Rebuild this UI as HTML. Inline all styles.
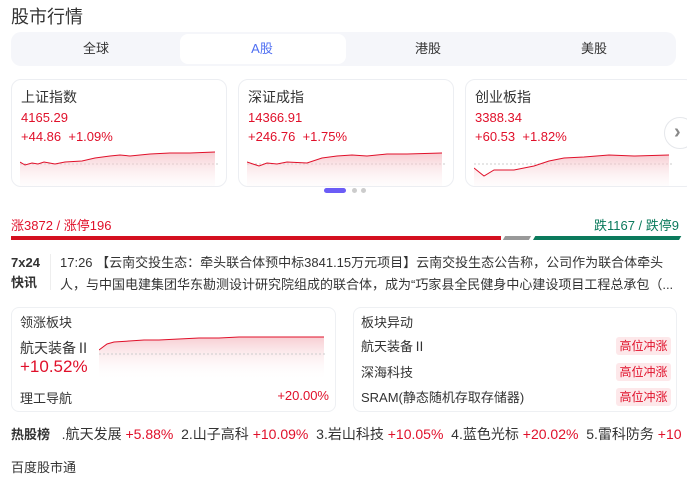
<!DOCTYPE html>
<html><head><meta charset="utf-8"><style>
*{margin:0;padding:0;box-sizing:border-box}
body{width:687px;height:477px;overflow:hidden;background:#fff;font-family:"Liberation Sans","Noto Sans CJK SC",sans-serif;color:#222;position:relative}
.a{position:absolute;white-space:nowrap}
.red{color:#e0102a}.grn{color:#0b7a5c}
.tab{position:absolute;top:0;height:34px;line-height:34px;font-size:13px;color:#333;text-align:center;width:166px}
.card{position:absolute;top:79px;width:216px;height:108px;border:1px solid #eceef2;border-radius:10px;overflow:hidden}
.card .t{position:absolute;left:9px;top:7px;font-size:14px;color:#333}
.card .p{position:absolute;left:9px;top:30px;font-size:13px;color:#e0102a}
.card .c{position:absolute;left:9px;top:49px;font-size:13px;color:#e0102a}
.card svg{position:absolute;left:8px;top:68px}
.box{position:absolute;top:307px;height:105px;border:1px solid #eef0f3;border-radius:8px}
.tag{position:absolute;right:5px;width:55px;height:18px;line-height:18px;text-align:center;font-size:12px;color:#e0102a;background:#fde8ea;border-radius:3px}
</style></head><body>
<div class="a" style="left:11px;top:3px;font-size:18px;color:#333">股市行情</div>
<div class="a" style="left:11px;top:32px;width:665px;height:34px;background:#f5f6fa;border-radius:10px">
<div class="a" style="left:169px;top:2px;width:166px;height:30px;background:#fff;border-radius:8px"></div>
<div class="tab" style="left:2px">全球</div>
<div class="tab" style="left:168px;color:#4e6ef2">A股</div>
<div class="tab" style="left:334px">港股</div>
<div class="tab" style="left:500px">美股</div>
</div>
<svg width="0" height="0" style="position:absolute"><defs><linearGradient id="g" x1="0" y1="0" x2="0" y2="1"><stop offset="0" stop-color="#f4b8bf" stop-opacity=".7"/><stop offset="1" stop-color="#fff" stop-opacity="0"/></linearGradient></defs></svg>
<div class="card" style="left:11px"><div class="t">上证指数</div><div class="p">4165.29</div><div class="c">+44.86&nbsp; +1.09%</div>
<svg width="200" height="40"><line x1="0" y1="16" x2="198" y2="16" stroke="#ccc" stroke-dasharray="2,2"/><path d="M0 6 L5 9 L12 7 L18 8 L24 6 L35 8 L45 6 L62 5 L75 2 L90 0 L100 -1 L110 0 L130 -2 L150 -3 L170 -3 L195 -4 L195 40 L0 40Z" transform="translate(0,8)" fill="url(#g)"/><path d="M0 6 L5 9 L12 7 L18 8 L24 6 L35 8 L45 6 L62 5 L75 2 L90 0 L100 -1 L110 0 L130 -2 L150 -3 L170 -3 L195 -4" transform="translate(0,8)" fill="none" stroke="#e0102a" stroke-width="1"/></svg></div>
<div class="card" style="left:238px"><div class="t">深证成指</div><div class="p">14366.91</div><div class="c">+246.76&nbsp; +1.75%</div>
<svg width="200" height="40"><line x1="0" y1="16" x2="198" y2="16" stroke="#ccc" stroke-dasharray="2,2"/><path d="M0 6 L12 10 L20 7 L30 8 L40 6 L60 7 L75 2 L90 0 L105 -1 L120 0 L140 -2 L160 -2 L195 -3 L195 40 L0 40Z" transform="translate(0,8)" fill="url(#g)"/><path d="M0 6 L12 10 L20 7 L30 8 L40 6 L60 7 L75 2 L90 0 L105 -1 L120 0 L140 -2 L160 -2 L195 -3" transform="translate(0,8)" fill="none" stroke="#e0102a"/></svg></div>
<div class="card" style="left:465px;width:230px"><div class="t">创业板指</div><div class="p">3388.34</div><div class="c">+60.53&nbsp; +1.82%</div>
<svg width="200" height="40"><line x1="0" y1="16" x2="198" y2="16" stroke="#ccc" stroke-dasharray="2,2"/><path d="M0 12 L10 20 L20 14 L40 14 L60 10 L75 5 L90 2 L110 1 L135 -1 L160 0 L195 -1 L195 40 L0 40Z" transform="translate(0,8)" fill="url(#g)"/><path d="M0 12 L10 20 L20 14 L40 14 L60 10 L75 5 L90 2 L110 1 L135 -1 L160 0 L195 -1" transform="translate(0,8)" fill="none" stroke="#e0102a"/></svg></div>
<div class="a" style="left:664px;top:117px;width:32px;height:32px;border-radius:50%;background:#fff;border:1px solid #e5e7eb;color:#888;font-size:20px;font-weight:bold;line-height:28px;padding-left:9px">›</div>
<div class="a" style="left:324px;top:188px;width:22px;height:5px;border-radius:3px;background:#6b5cf6"></div>
<div class="a" style="left:352px;top:188px;width:5px;height:5px;border-radius:50%;background:#ccc"></div>
<div class="a" style="left:361px;top:188px;width:5px;height:5px;border-radius:50%;background:#ccc"></div>
<div class="a red" style="left:11px;top:215px;font-size:13px">涨3872 / 涨停196</div>
<div class="a grn" style="right:8px;top:215px;font-size:13px">跌1167 / 跌停9</div>
<div class="a" style="left:11px;top:236px;width:490px;height:4px;background:#d4101f"></div>
<div class="a" style="left:504px;top:236px;width:26px;height:4px;background:#999;transform:skewX(-30deg)"></div>
<div class="a" style="left:533px;top:236px;width:146px;height:4px;background:#0b7a5c;transform:skewX(-30deg);transform-origin:bottom"></div>
<div class="a" style="left:11px;top:253px;font-size:13px;font-weight:bold;color:#333;line-height:20px">7x24<br>快讯</div>
<div class="a" style="left:50px;top:254px;width:1px;height:36px;background:#eee"></div>
<div class="a" style="left:60px;top:252px;font-size:13px;color:#333;line-height:22px">17:26 【云南交投生态：牵头联合体预中标3841.15万元项目】云南交投生态公告称，公司作为联合体牵头<br>人，与中国电建集团华东勘测设计研究院组成的联合体，成为“巧家县全民健身中心建设项目工程总承包（...</div>
<div class="box" style="left:11px;width:325px">
<div class="a" style="left:8px;top:4px;font-size:13px;color:#333">领涨板块</div>
<div class="a" style="left:8px;top:30px;font-size:14px;color:#333">航天装备Ⅱ</div>
<div class="a red" style="left:8px;top:49px;font-size:17px">+10.52%</div>
<svg class="a" style="left:87px;top:28px" width="230" height="45"><path d="M0 14 L8 8 L15 6 L30 5 L45 4 L60 4 L80 3 L100 2 L120 2 L140 1 L160 1 L185 1 L210 1 L225 1 L225 45 L0 45Z" fill="url(#g)"/><line x1="0" y1="18" x2="228" y2="18" stroke="#ccc" stroke-dasharray="2,2"/><path d="M0 14 L8 8 L15 6 L30 5 L45 4 L60 4 L80 3 L100 2 L120 2 L140 1 L160 1 L185 1 L210 1 L225 1" fill="none" stroke="#e0102a"/></svg>
<div class="a" style="left:8px;top:80px;font-size:13px;color:#333">理工导航</div>
<div class="a red" style="right:6px;top:80px;font-size:13px">+20.00%</div>
</div>
<div class="box" style="left:353px;width:324px">
<div class="a" style="left:7px;top:4px;font-size:13px;color:#333">板块异动</div>
<div class="a" style="left:7px;top:28px;font-size:13px;color:#333">航天装备Ⅱ</div><div class="tag" style="top:29px">高位冲涨</div>
<div class="a" style="left:7px;top:54px;font-size:13px;color:#333">深海科技</div><div class="tag" style="top:55px">高位冲涨</div>
<div class="a" style="left:7px;top:79px;font-size:13px;color:#333">SRAM(静态随机存取存储器)</div><div class="tag" style="top:80px">高位冲涨</div>
</div>
<div class="a" style="left:11px;top:424px;font-size:14px;color:#333"><b style="font-size:13px">热股榜</b>&nbsp;&nbsp; .航天发展 <span class="red">+5.88%</span>&nbsp; 2.山子高科 <span class="red">+10.09%</span>&nbsp; 3.岩山科技 <span class="red">+10.05%</span>&nbsp; 4.蓝色光标 <span class="red">+20.02%</span>&nbsp; 5.雷科防务 <span class="red">+10</span></div>
<div class="a" style="left:11px;top:457px;font-size:13px;color:#333">百度股市通</div>
</body></html>
